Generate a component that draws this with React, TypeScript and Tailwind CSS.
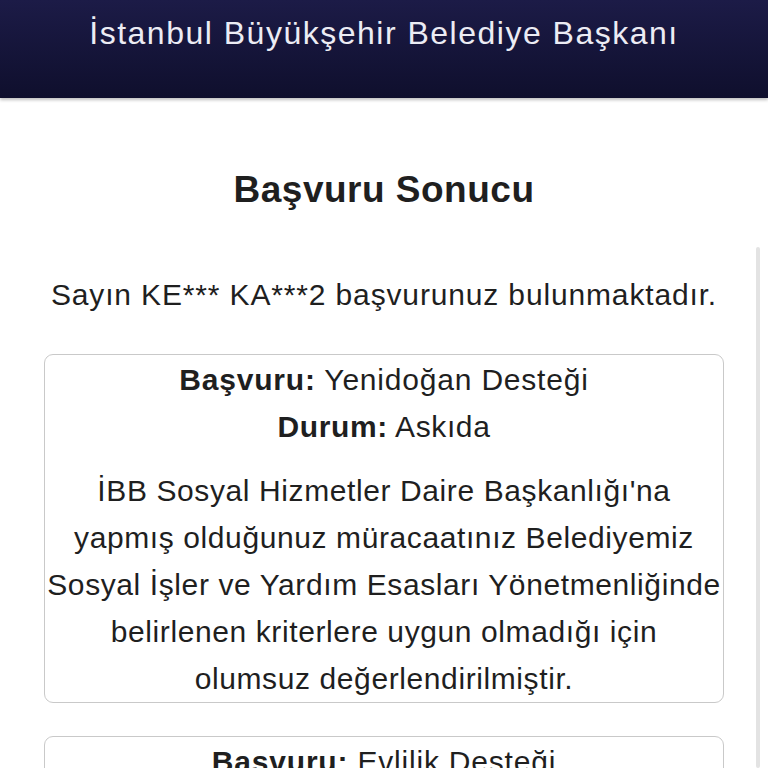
import React from "react";

export default function App() {
  return (
    <div className="relative w-[768px] h-[768px] overflow-hidden bg-white" style={{ fontFamily: '"Liberation Sans", Arial, sans-serif' }}>
      <header className="h-[98px] bg-gradient-to-b from-[#1c1b47] to-[#0f0f2d] shadow-[0_2px_3px_rgba(0,0,0,0.25)] flex justify-center">
        <div className="pt-[13px] text-[32px] leading-[40px] tracking-[1.5px] text-[#ececf4]">İstanbul Büyükşehir Belediye Başkanı</div>
      </header>
      <main className="flex flex-col items-center text-[#1f1f1f]">
        <h1 className="mt-[70px] text-[37px] leading-[44px] tracking-[0.5px] font-bold">Başvuru Sonucu</h1>
        <p className="mt-[63px] text-[30px] leading-[40px] tracking-[0.85px]">Sayın KE*** KA***2 başvurunuz bulunmaktadır.</p>
        <div className="mt-[39px] w-[680px] border-[1.5px] border-[#c9c9c9] rounded-[9px] text-center text-[30px] leading-[47px] tracking-[0.6px] whitespace-nowrap pt-[1px]">
          <div className="tracking-[0.8px]"><span className="font-bold">Başvuru:</span> Yenidoğan Desteği</div>
          <div><span className="font-bold">Durum:</span> Askıda</div>
          <div className="mt-[17px]">
            İBB Sosyal Hizmetler Daire Başkanlığı'na<br />
            yapmış olduğunuz müracaatınız Belediyemiz<br />
            Sosyal İşler ve Yardım Esasları Yönetmenliğinde<br />
            belirlenen kriterlere uygun olmadığı için<br />
            olumsuz değerlendirilmiştir.
          </div>
        </div>
        <div className="mt-[33px] w-[680px] border-[1.5px] border-[#c9c9c9] rounded-[9px] text-center text-[30px] leading-[47px] tracking-[0.6px] whitespace-nowrap pt-[1px]">
          <div className="tracking-[0.8px]"><span className="font-bold">Başvuru:</span> Evlilik Desteği</div>
          <div><span className="font-bold">Durum:</span> Askıda</div>
        </div>
      </main>
      <div className="absolute left-[756px] top-[247px] w-[4px] h-[521px] bg-[#e3e3e3] rounded-full" />
    </div>
  );
}
